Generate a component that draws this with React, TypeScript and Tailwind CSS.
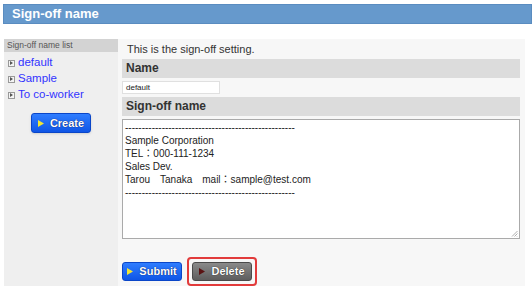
export default function App() {
  const dashes = "---------------------------------------------------";
  return (
    <div className="w-[532px] h-[291px] bg-white pt-[4px] pl-[3px] font-['Liberation_Sans','Noto_Sans_CJK_JP',Arial,sans-serif] overflow-hidden">
      <div className="h-[20px] bg-[#6699cc] border border-[#5a8cc0] flex items-center pl-[8px]">
        <span className="text-white font-bold text-[13px]">Sign-off name</span>
      </div>

      <div className="flex mt-[15px] h-[247px]">
        {/* left list */}
        <div className="w-[114px] ml-[1px] bg-[#efefef] flex flex-col">
          <div className="h-[13px] bg-[#d3d3d3] text-[8.5px] text-[#555] pl-[3px] leading-[13px]">Sign-off name list</div>
          <div className="flex flex-col pl-[4px] mt-[4px] gap-[2px]">
            {["default", "Sample", "To co-worker"].map((n) => (
              <div key={n} className="flex items-center gap-[3px] h-[14px]">
                <span className="w-[7px] h-[7px] border border-[#999] bg-[#f4f4f4] flex items-center justify-center">
                  <svg width="3" height="4" viewBox="0 0 3 4"><path d="M0 0L3 2L0 4Z" fill="#555" /></svg>
                </span>
                <span className="text-[11.5px] text-[#3333ff]">{n}</span>
              </div>
            ))}
          </div>
          <div className="flex justify-center mt-[11px]">
            <button className="w-[60px] h-[20px] rounded-[3px] bg-gradient-to-b from-[#2f7dff] to-[#0f55e6] border border-[#0a46c8] flex items-center justify-center gap-[6px] shadow-sm">
              <svg width="6" height="7" viewBox="0 0 6 7"><path d="M0 0L6 3.5L0 7Z" fill="#f1e635" /></svg>
              <span className="text-white font-bold text-[11px] [text-shadow:0_0_1px_#003]">Create</span>
            </button>
          </div>
        </div>

        {/* main */}
        <div className="w-[407px] bg-[#f7f7f7] pl-[4px] pr-[5px] flex flex-col">
          <div className="h-[20px] text-[11px] text-[#333] pl-[5px] leading-[20px]">This is the sign-off setting.</div>
          <div className="h-[19px] bg-[#dcdcdc] text-[12px] font-bold text-[#333] pl-[4px] leading-[19px]">Name</div>
          <div className="mt-[3px] w-[98px] h-[13px] bg-white border border-[#e0e0e0] text-[8px] text-[#222] pl-[3px] leading-[11px]">default</div>
          <div className="mt-[3px] h-[19px] bg-[#dcdcdc] text-[12px] font-bold text-[#333] pl-[4px] leading-[19px]">Sign-off name</div>
          <div className="mt-[3px] h-[125px] bg-white border border-[#aaa] relative pl-[2px] pt-[1px] text-[10px] text-[#222] leading-[13px] whitespace-pre">
            <div>{dashes}</div>
            <div>Sample Corporation</div>
            <div>TEL：000-111-1234</div>
            <div>Sales Dev.</div>
            <div>Tarou　Tanaka　mail：sample@test.com</div>
            <div>{dashes}</div>
            <svg className="absolute right-[1px] bottom-[1px]" width="7" height="7" viewBox="0 0 7 7">
              <path d="M6.5 1L1 6.5M6.5 3.5L3.5 6.5M6.5 6L6 6.5" stroke="#999" strokeWidth="0.8" />
            </svg>
          </div>
          <div className="flex items-center mt-[18px] gap-[5px]">
            <button className="w-[60px] h-[19px] rounded-[3px] bg-gradient-to-b from-[#2f7dff] to-[#0f55e6] border border-[#0a46c8] flex items-center justify-center gap-[6px]">
              <svg width="6" height="7" viewBox="0 0 6 7"><path d="M0 0L6 3.5L0 7Z" fill="#f1e635" /></svg>
              <span className="text-white font-bold text-[11px] [text-shadow:0_0_1px_#003]">Submit</span>
            </button>
            <div className="border-2 border-[#e23b3b] rounded-[4px] p-[3px]">
              <button className="w-[60px] h-[19px] rounded-[3px] bg-gradient-to-b from-[#8a8a8a] to-[#5e5e5e] border border-[#4a4a4a] flex items-center justify-center gap-[6px]">
                <svg width="6" height="7" viewBox="0 0 6 7"><path d="M0 0L6 3.5L0 7Z" fill="#5a1212" /></svg>
                <span className="text-white font-bold text-[11px] [text-shadow:0_0_1px_#000]">Delete</span>
              </button>
            </div>
          </div>
        </div>
      </div>
    </div>
  );
}
